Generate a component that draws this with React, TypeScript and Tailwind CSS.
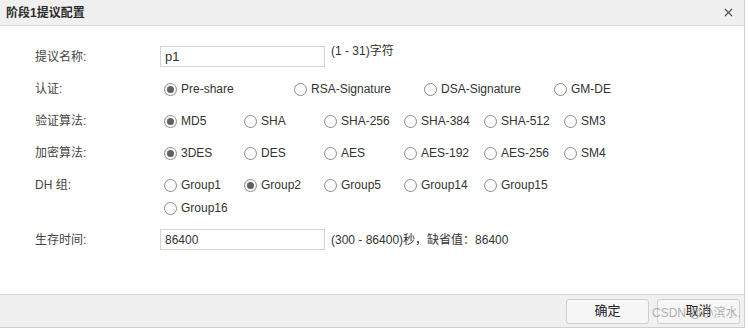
import { X } from 'lucide-react';

type Row = {
  label: string;
  options: string[];
  checked: string;
  width: string;
  box: string;
};

const rows: Row[] = [
  { label: '认证:', options: ['Pre-share', 'RSA-Signature', 'DSA-Signature', 'GM-DE'], checked: 'Pre-share', width: 'w-[130px]', box: 'w-[540px]' },
  { label: '验证算法:', options: ['MD5', 'SHA', 'SHA-256', 'SHA-384', 'SHA-512', 'SM3'], checked: 'MD5', width: 'w-[80px]', box: 'w-[540px]' },
  { label: '加密算法:', options: ['3DES', 'DES', 'AES', 'AES-192', 'AES-256', 'SM4'], checked: '3DES', width: 'w-[80px]', box: 'w-[540px]' },
  { label: 'DH 组:', options: ['Group1', 'Group2', 'Group5', 'Group14', 'Group15', 'Group16'], checked: 'Group2', width: 'w-[80px]', box: 'w-[420px]' },
];

const Radio = ({ on }: { on: boolean }) => (
  <span className="flex h-[13px] w-[13px] shrink-0 items-center justify-center rounded-full border border-[#8a8a8a] bg-white">
    {on && <span className="h-[7px] w-[7px] rounded-full bg-[#5f5f5f]" />}
  </span>
);

const App = () => {
  return (
    <div className="relative h-[328px] w-[748px] overflow-hidden bg-white font-['Liberation_Sans','Noto_Sans_CJK_SC',sans-serif] text-[12px] text-[#333]">
      <div className="flex h-[328px] w-[745px] flex-col border-r border-b border-[#cfcfcf]">
        {/* title */}
        <div className="flex h-[26px] shrink-0 items-center justify-between border-b border-[#dcdcdc] bg-[#f0f0f0] pl-[6px] pr-[9px]">
          <span className="font-bold text-[12px] text-[#2b2b2b]">阶段1提议配置</span>
          <X className="h-[13px] w-[13px] text-[#555]" strokeWidth={2.2} />
        </div>

        {/* body */}
        <div className="flex-1 pl-[35px] pt-[20px]">
          <div className="flex h-[21px] items-center">
            <span className="w-[125px] text-[#444]">提议名称:</span>
            <div className="flex h-[21px] w-[165px] items-center border border-[#d4d4d4] px-[4px] text-[13px]">p1</div>
            <span className="ml-[6px] -mt-[12px]">(1 - 31)字符</span>
          </div>

          {rows.map((row) => (
            <div key={row.label} className="mt-[12px] flex">
              <span className="flex h-[20px] w-[125px] shrink-0 items-center text-[#444]">{row.label}</span>
              <div className={`flex ${row.box} flex-wrap gap-y-[3px] pl-[4px]`}>
                {row.options.map((opt) => (
                  <label key={opt} className={`flex h-[20px] ${row.width} items-center gap-[4px]`}>
                    <Radio on={opt === row.checked} />
                    <span className="whitespace-nowrap">{opt}</span>
                  </label>
                ))}
              </div>
            </div>
          ))}

          <div className="mt-[11px] flex h-[21px] items-center">
            <span className="w-[125px] text-[#444]">生存时间:</span>
            <div className="flex h-[21px] w-[165px] items-center border border-[#d4d4d4] px-[4px] text-[12px]">86400</div>
            <span className="ml-[6px]">(300 - 86400)秒，缺省值：86400</span>
          </div>
        </div>

        {/* footer */}
        <div className="flex h-[33px] shrink-0 items-center justify-end gap-[8px] border-t border-[#d6d6d6] bg-[#f0f0f0] pr-[4px]">
          <button className="h-[25px] w-[83px] rounded-[3px] border border-[#cfcfcf] bg-[#f6f6f6] text-[13px] text-[#222]">确定</button>
          <button className="h-[25px] w-[83px] rounded-[3px] border border-[#cfcfcf] bg-[#f6f6f6] text-[13px] text-[#222]">取消</button>
        </div>
      </div>

      <span className="pointer-events-none absolute left-[652px] top-[304px] whitespace-nowrap text-[12px] text-[#9a9a9a]/80">CSDN @小滨水.</span>
    </div>
  );
};

export default App;
